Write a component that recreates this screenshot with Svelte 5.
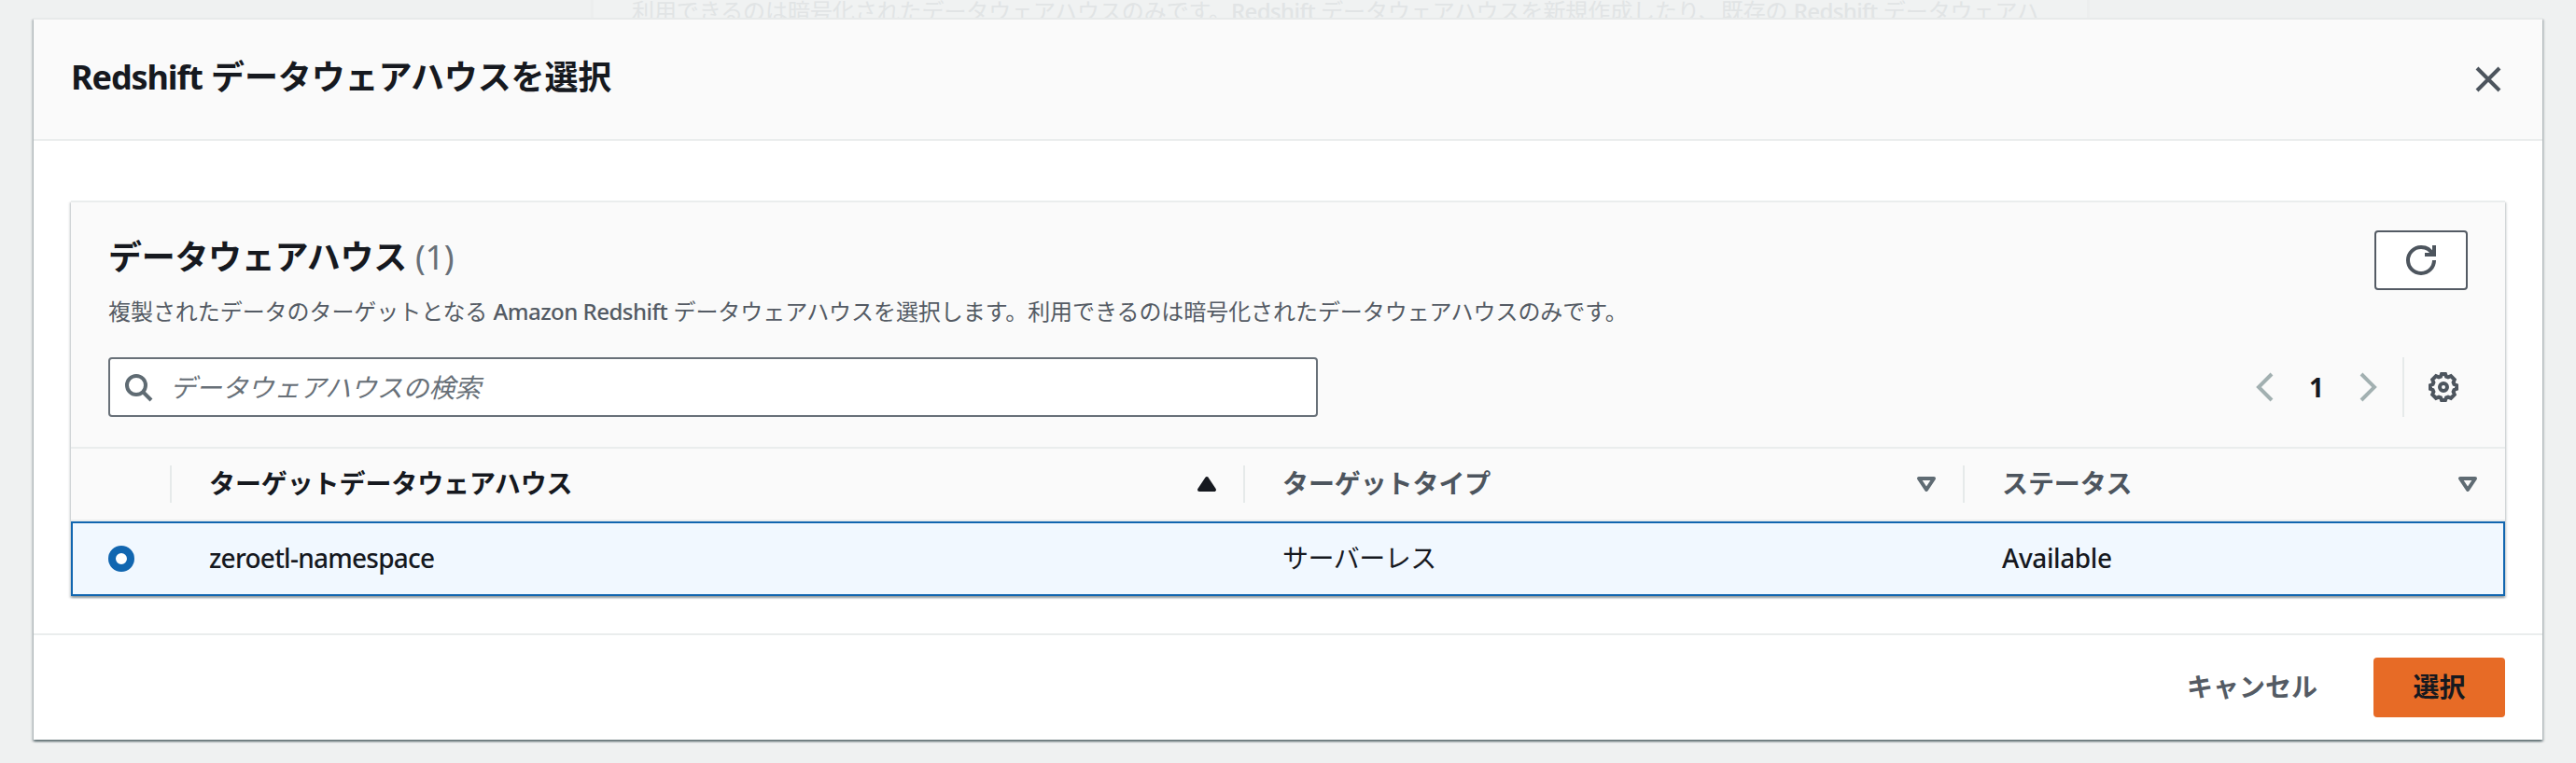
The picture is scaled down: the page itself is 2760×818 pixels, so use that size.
<script>
  const rows = [{ name: 'zeroetl-namespace', type: 'サーバーレス', status: 'Available' }];
</script>

<div class="page">
  <div class="behind">
    <p>利用できるのは暗号化されたデータウェアハウスのみです。<span class="b1">Redshift</span> データウェアハウスを新規作成したり、既存の <span class="b1">Redshift</span> データウェアハ</p>
  </div>

  <section class="modal">
    <header>
      <h1><span class="t1">Redshift</span> データウェアハウスを選択</h1>
      <button class="icon close" aria-label="閉じる">
        <svg width="32" height="32" viewBox="0 0 16 16"><path d="M2 2l12 12M14 2L2 14" /></svg>
      </button>
    </header>

    <div class="body">
      <div class="card">
        <div class="tools">
          <div class="top">
            <div>
              <h2>データウェアハウス <span class="count">(1)</span></h2>
              <p class="desc">複製されたデータのターゲットとなる <span class="d1">Amazon Redshift</span> データウェアハウスを選択します。利用できるのは暗号化されたデータウェアハウスのみです。</p>
            </div>
            <button class="refresh" aria-label="更新">
              <svg width="32" height="32" viewBox="0 0 16 16"><path d="M10 5h5V0" /><path d="M15 8a6.957 6.957 0 0 1-7 7 6.957 6.957 0 0 1-7-7 6.957 6.957 0 0 1 7-7 6.87 6.87 0 0 1 6.3 4" /></svg>
            </button>
          </div>
          <div class="filter">
            <div class="search">
              <svg width="32" height="32" viewBox="0 0 16 16"><circle cx="7" cy="7" r="5" /><path d="M15 15l-4.500-4.500" /></svg>
              <span>データウェアハウスの検索</span>
            </div>
            <div class="pager">
              <svg class="chev" width="32" height="32" viewBox="0 0 16 16"><path d="M12 1L5 8l7 7" /></svg>
              <b>1</b>
              <svg class="chev" width="32" height="32" viewBox="0 0 16 16"><path d="M4 1l7 7-7 7" /></svg>
              <i></i>
              <svg class="gear" width="32" height="32" viewBox="0 0 16 16"><path d="M7 1h2l.5 1.300 1 .4 1.500-.6 1.900 1.900-.6 1.500.4 1L15 7v2l-1.300.5-.4 1 .6 1.500-1.900 1.900-1.500-.6-1 .4L9 15H7l-.5-1.300-1-.4-1.500.6L2.100 12l.6-1.500-.4-1L1 9V7l1.300-.5.4-1L2.100 4 4 2.100l1.500.6 1-.4z" /><circle cx="8" cy="8" r="2" /></svg>
            </div>
          </div>
        </div>

        <div class="grid head">
          <div></div>
          <div class="cell sorted"><span>ターゲットデータウェアハウス</span><svg width="22" height="18" viewBox="0 0 22 18"><path class="full" d="M11 3L19 15H3z" /></svg></div>
          <div class="cell"><span>ターゲットタイプ</span><svg width="22" height="18" viewBox="0 0 22 18"><path d="M3 3h16L11 15z" /></svg></div>
          <div class="cell last"><span>ステータス</span><svg width="22" height="18" viewBox="0 0 22 18"><path d="M3 3h16L11 15z" /></svg></div>
        </div>
        {#each rows as row}
          <div class="grid row">
            <div class="pick"><span class="radio"></span></div>
            <div class="cell n1">{row.name}</div>
            <div class="cell type">{row.type}</div>
            <div class="cell a1">{row.status}</div>
          </div>
        {/each}
      </div>
    </div>

    <footer>
      <button class="link">キャンセル</button>
      <button class="primary">選択</button>
    </footer>
  </section>
</div>

<style>
  :global(body) { margin: 0; overflow: hidden; }
  * { box-sizing: border-box; }
  .page {
    position: relative; width: 2760px; height: 818px; overflow: hidden;
    padding: 19px 36px 0; background: #eff1f1; color: #16191f;
    font: 28px/44px "Noto Sans", "Noto Sans CJK JP", sans-serif;
  }
  h1, h2, p { margin: 0; white-space: nowrap; }
  button { font: inherit; color: inherit; border: 0; background: none; padding: 0; margin: 0; }
  svg { display: block; flex: none; fill: none; stroke: #4d555e; stroke-width: 2; }
  .behind {
    position: absolute; top: 0; left: 633px; width: 1606px; height: 19px; overflow: hidden;
    border: solid #eceeee; border-width: 0 3px; background: #f0f2f2;
    padding-left: 41px; color: #e1e4e5; font-size: 24px; letter-spacing: -.08px;
  }
  .behind p { line-height: 36px; margin-top: -6px; }
  .b1 { font-weight: 500; letter-spacing: -.6px; }
  .modal {
    position: relative; height: 774px; background: #fff; border-top: 2px solid #e7eaea;
    box-shadow: 0 2px 2px rgba(0, 28, 36, .45), 2px 2px 2px rgba(0, 28, 36, .15), -2px 2px 2px rgba(0, 28, 36, .15);
  }
  header {
    height: 130px; display: flex; justify-content: space-between; align-items: flex-start;
    padding: 40px 42px 0 40px; background: #fafafa; border-bottom: 2px solid #eaeded;
  }
  h1, h2 { font-size: 36px; font-weight: 700; line-height: 44px; }
  h1 { letter-spacing: -.12px; }
  .t1 { letter-spacing: -1.1px; }
  .close { margin-top: 8px; }
  .body { padding: 64px 40px 40px; }
  .card {
    height: 424px; border-top: 2px solid #eaeded; background: #fafafa;
    box-shadow: 0 2px 2px rgba(0, 28, 36, .3), 2px 2px 2px rgba(0, 28, 36, .1), -2px 2px 2px rgba(0, 28, 36, .1);
  }
  .tools { height: 264px; padding: 30px 40px 0; border-bottom: 2px solid #eaeded; }
  .top { display: flex; justify-content: space-between; height: 136px; }
  h2 { margin-top: 7px; letter-spacing: -.3px; }
  .count { font-weight: 400; color: #687078; }
  .desc { font-size: 24px; line-height: 36px; margin-top: 18px; color: #545b64; letter-spacing: -.06px; }
  .d1 { font-weight: 500; letter-spacing: -.5px; }
  .refresh {
    width: 100px; height: 64px; border: 2px solid #545b64; border-radius: 4px; background: #fff;
    display: grid; place-items: center;
  }
  .filter { display: flex; justify-content: space-between; }
  .search {
    width: 1296px; height: 64px; border: 2px solid #687078; border-radius: 4px; background: #fff;
    display: flex; align-items: center; gap: 18px; padding-left: 14px; color: #687078; font-style: italic;
    letter-spacing: -.15px;
  }
  .search svg { stroke: #5f6b73; }
  .pager { display: flex; align-items: center; height: 64px; padding-right: 10px; }
  .pager b { width: 80px; text-align: center; line-height: 44px; }
  .pager .chev { stroke: #a2b0b1; }
  .pager i { width: 2px; height: 64px; background: #e6eaea; margin: 0 26px 0 20px; }
  .grid { display: grid; grid-template-columns: 106px 1150px 771px 581px; align-items: center; }
  .head { height: 78px; border-bottom: 2px solid #eaeded; font-weight: 700; color: #4d555e; }
  .head .cell {
    display: flex; align-items: center; justify-content: space-between; height: 40px;
    border-left: 2px solid #e6eaea; padding: 0 28px 0 40px;
  }
  .head .cell span { margin-top: -2px; letter-spacing: -.1px; }
  .head .last { padding-right: 29px; }
  .head .sorted { color: #16191f; }
  .head svg { stroke: #5f6b73; stroke-width: 4; stroke-linejoin: round; }
  .head .full { fill: #16191f; stroke: #16191f; }
  .row {
    height: 80px; border: 2px solid #1166b0; background: #f1f8ff; white-space: nowrap;
    grid-template-columns: 104px 1150px 771px 579px;
  }
  .row .cell { padding: 0 0 2px 42px; }
  .row .type { letter-spacing: -.5px; }
  .n1 { font-weight: 500; letter-spacing: -.75px; }
  .a1 { font-weight: 500; letter-spacing: -.4px; }
  .pick { padding-left: 38px; }
  .radio { display: block; width: 28px; height: 28px; border: 8px solid #1166b0; border-radius: 50%; background: #fff; }
  footer {
    display: flex; justify-content: flex-end; align-items: center; height: 114px;
    border-top: 2px solid #eaeded; padding-right: 40px; gap: 60px; font-weight: 700;
  }
  .link { color: #545b64; margin-top: -2px; }
  .primary { width: 141px; height: 64px; border-radius: 4px; background: #e76b26; padding-bottom: 2px; }
</style>
